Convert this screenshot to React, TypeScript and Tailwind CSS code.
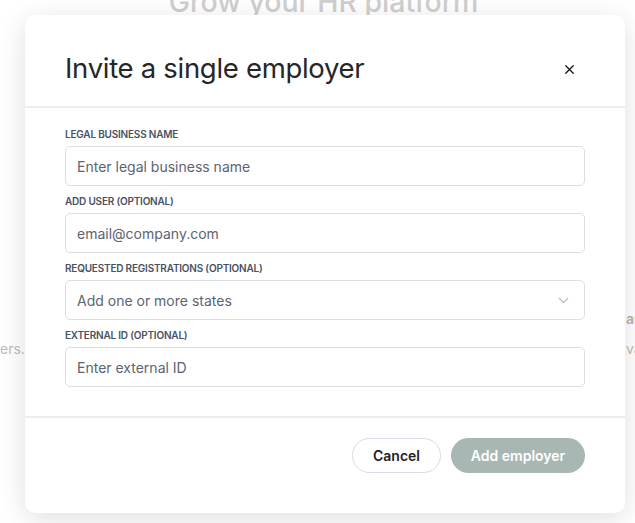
import { X, ChevronDown } from 'lucide-react';

const fields = [
  { label: 'Legal business name', placeholder: 'Enter legal business name' },
  { label: 'Add user (optional)', placeholder: 'email@company.com' },
  { label: 'Requested registrations (optional)', placeholder: 'Add one or more states', select: true },
  { label: 'External ID (optional)', placeholder: 'Enter external ID' },
];

function Field({ label, placeholder, select }: { label: string; placeholder: string; select?: boolean }) {
  return (
    <div className="flex flex-col">
      <label className="mb-[6px] text-[10px] font-semibold uppercase leading-[12px] tracking-[-0.2px] text-[#4a5261]">
        {label}
      </label>
      <div className="flex h-10 items-center justify-between rounded-[5px] border border-[#d9dee7] bg-white pl-[11px] pr-[12px]">
        <span className="text-[14px] text-[#5d6370]">{placeholder}</span>
        {select && <ChevronDown className="h-[17px] w-[17px] text-[#b4b9c1]" strokeWidth={1.75} />}
      </div>
    </div>
  );
}

export default function App() {
  return (
    <div className="relative h-[523px] w-[635px] overflow-hidden bg-white font-['Inter',sans-serif]">
      {/* page behind the dialog */}
      <div className="flex flex-col items-center pl-[12px]">
        <h1 className="-mt-[19px] text-[28.5px] font-medium text-[#cfcfcf]">Grow your HR platform</h1>
      </div>
      <div className="absolute left-0 top-[338px] text-[14px] text-[#bdbdbd]">ers.</div>
      <div className="absolute left-[626px] top-[308px] text-[14px] font-semibold text-[#b5b5b5]">ar</div>
      <div className="absolute left-[626px] top-[338px] text-[14px] text-[#bdbdbd]">va</div>

      {/* dialog */}
      <div className="absolute left-[25px] top-[15px] flex w-[600px] flex-col rounded-[10px] bg-white shadow-[0_6px_28px_rgba(0,0,0,0.13)]">
        <div className="flex h-[93px] items-center justify-between border-b-2 border-[#eaeef3] pl-10 pr-[48px] pt-[17px]">
          <h2 className="text-[27.5px] font-normal tracking-[-0.3px] text-[#262626]">Invite a single employer</h2>
          <X className="h-[15px] w-[15px] text-[#111]" strokeWidth={2} />
        </div>
        <div className="flex flex-col gap-[9px] border-b-2 border-[#eaeef3] px-10 pb-[29px] pt-[20px]">
          {fields.map((f) => (
            <Field key={f.label} {...f} />
          ))}
        </div>
        <div className="flex justify-end gap-[10px] px-10 pb-[40px] pt-[20px]">
          <button className="h-[35px] w-[89px] rounded-full border border-[#d7dce6] text-[14px] font-semibold text-[#222]">
            Cancel
          </button>
          <button className="h-[35px] w-[134px] rounded-full bg-[#a9b7b4] text-[14px] font-semibold text-white">
            Add employer
          </button>
        </div>
      </div>
    </div>
  );
}
